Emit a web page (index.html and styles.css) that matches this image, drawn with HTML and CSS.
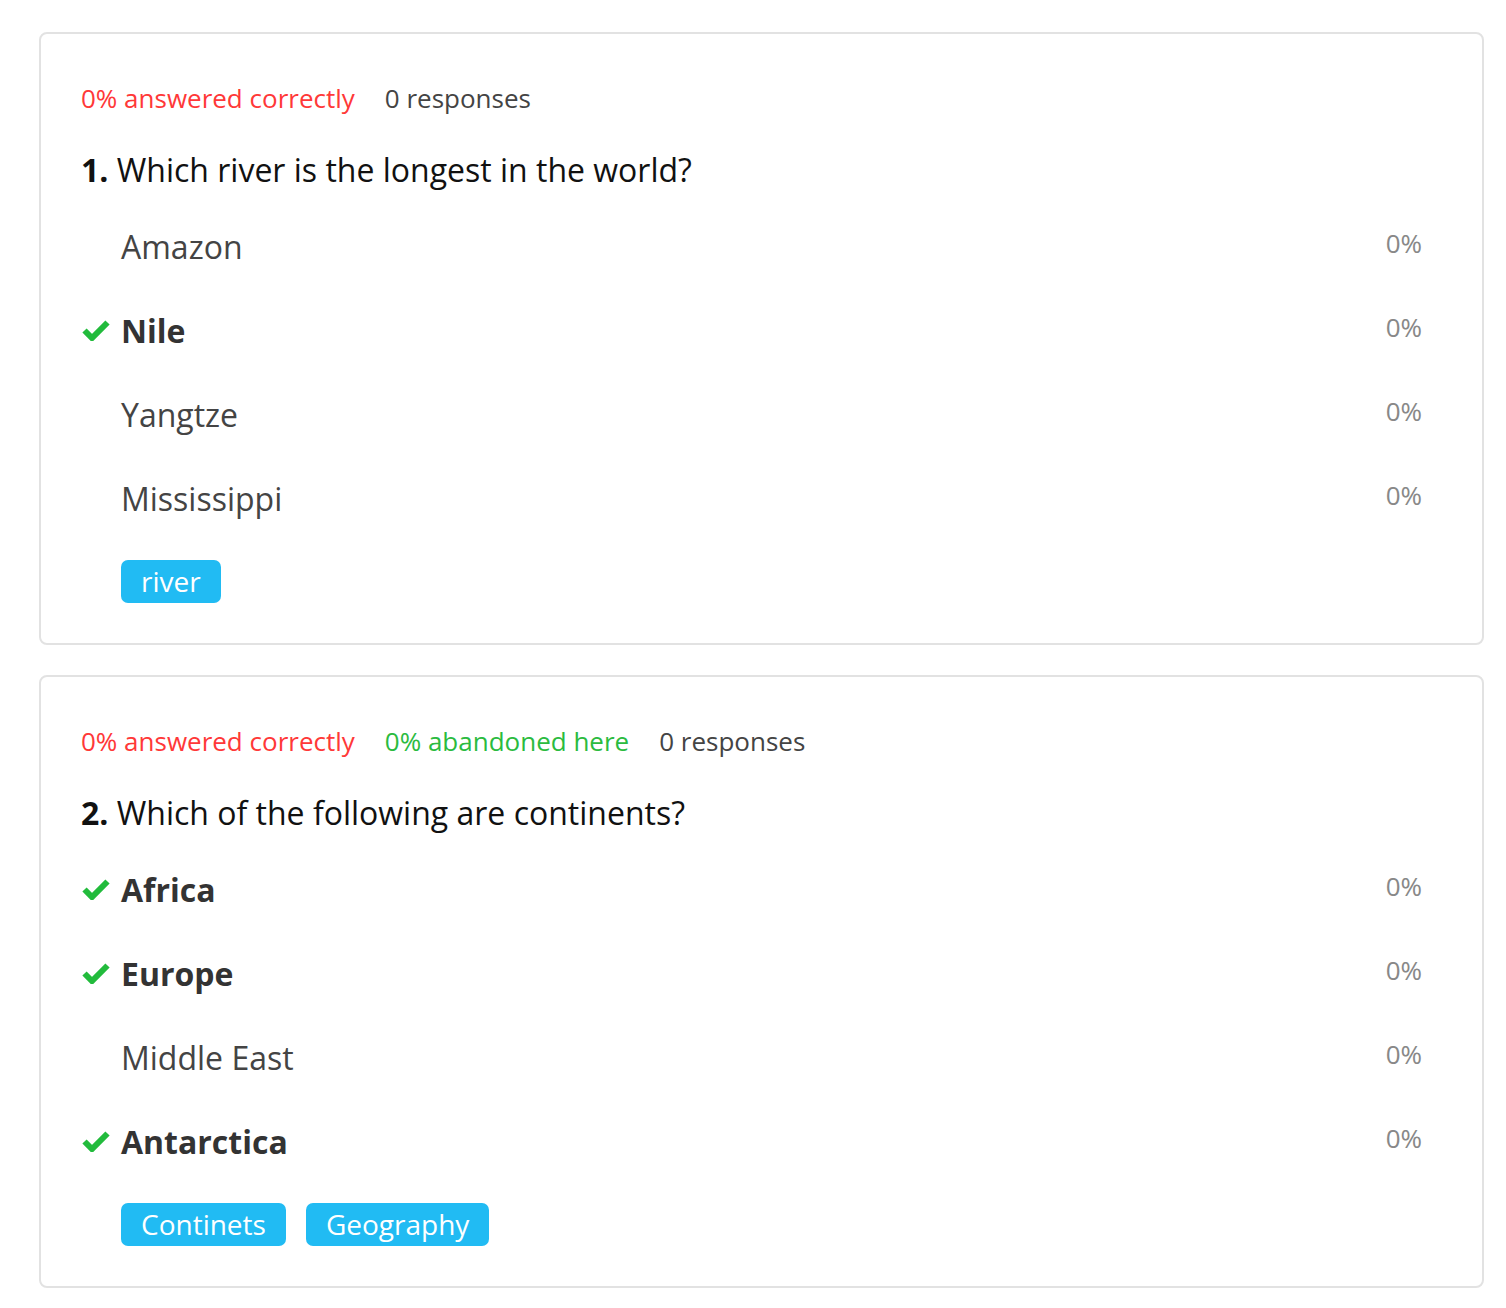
FILE: index.html
```html
<!DOCTYPE html>
<html>
<head>
<meta charset="utf-8">
<link rel="stylesheet" href="styles.css">
</head>
<body>
<div class="page">
  <section class="card">
    <div class="stats">
      <span class="stat-red">0% answered correctly</span>
      <span class="stat-gray">0 responses</span>
    </div>
    <h2 class="question"><b>1.</b> Which river is the longest in the world?</h2>
    <ul class="options">
      <li class="option"><span class="mark"></span><span class="label">Amazon</span><span class="pct">0%</span></li>
      <li class="option correct"><span class="mark"><svg viewBox="0 0 28 22" width="28" height="22"><path d="M2.5 11.5 L10 19 L25.5 3.5" fill="none" stroke="#22bb3c" stroke-width="6"/></svg></span><span class="label">Nile</span><span class="pct">0%</span></li>
      <li class="option"><span class="mark"></span><span class="label">Yangtze</span><span class="pct">0%</span></li>
      <li class="option"><span class="mark"></span><span class="label">Mississippi</span><span class="pct">0%</span></li>
    </ul>
    <div class="tags"><span class="tag">river</span></div>
  </section>
  <section class="card">
    <div class="stats">
      <span class="stat-red">0% answered correctly</span>
      <span class="stat-green">0% abandoned here</span>
      <span class="stat-gray">0 responses</span>
    </div>
    <h2 class="question"><b>2.</b> Which of the following are continents?</h2>
    <ul class="options">
      <li class="option correct"><span class="mark"><svg viewBox="0 0 28 22" width="28" height="22"><path d="M2.5 11.5 L10 19 L25.5 3.5" fill="none" stroke="#22bb3c" stroke-width="6"/></svg></span><span class="label">Africa</span><span class="pct">0%</span></li>
      <li class="option correct"><span class="mark"><svg viewBox="0 0 28 22" width="28" height="22"><path d="M2.5 11.5 L10 19 L25.5 3.5" fill="none" stroke="#22bb3c" stroke-width="6"/></svg></span><span class="label">Europe</span><span class="pct">0%</span></li>
      <li class="option"><span class="mark"></span><span class="label">Middle East</span><span class="pct">0%</span></li>
      <li class="option correct"><span class="mark"><svg viewBox="0 0 28 22" width="28" height="22"><path d="M2.5 11.5 L10 19 L25.5 3.5" fill="none" stroke="#22bb3c" stroke-width="6"/></svg></span><span class="label">Antarctica</span><span class="pct">0%</span></li>
    </ul>
    <div class="tags"><span class="tag">Continets</span><span class="tag">Geography</span></div>
  </section>
</div>
</body>
</html>
```

FILE: styles.css
```css
html, body {
  margin: 0;
  padding: 0;
  background: #fff;
}
body {
  font-family: "Open Sans", "Noto Sans", sans-serif;
  color: #333;
}
.page {
  padding: 32px 22px 0 39px;
  display: flex;
  flex-direction: column;
  gap: 30px;
}
.card {
  border: 2px solid #e2e2e2;
  border-radius: 8px;
  padding: 46px 60px 40px 40px;
}
.stats {
  display: flex;
  gap: 30px;
  font-size: 26px;
  line-height: 36px;
}
.stat-red { color: #ff3838; }
.stat-green { color: #2bbb3f; }
.stat-gray { color: #444; }
.question {
  margin: 30px 0 10px;
  font-size: 32px;
  line-height: 48px;
  font-weight: 400;
  color: #111;
}
.question b { font-weight: 700; }
.options {
  list-style: none;
  margin: 0;
  padding: 0;
}
.option {
  display: flex;
  align-items: center;
  height: 84px;
}
.mark {
  width: 40px;
  display: flex;
  align-items: center;
}
.mark svg { display: block; margin-left: 1px; }
.label {
  flex: 1;
  font-size: 32px;
  color: #444;
}
.correct .label {
  font-weight: 700;
  color: #333;
}
.pct {
  font-size: 26px;
  color: #888;
  margin-top: -6px;
}
.tags {
  display: flex;
  gap: 20px;
  margin: 20px 0 0 40px;
}
.tag {
  background: #21bbf3;
  color: #fff;
  font-size: 28px;
  line-height: 43px;
  height: 43px;
  padding: 0 20px;
  border-radius: 7px;
}
```
